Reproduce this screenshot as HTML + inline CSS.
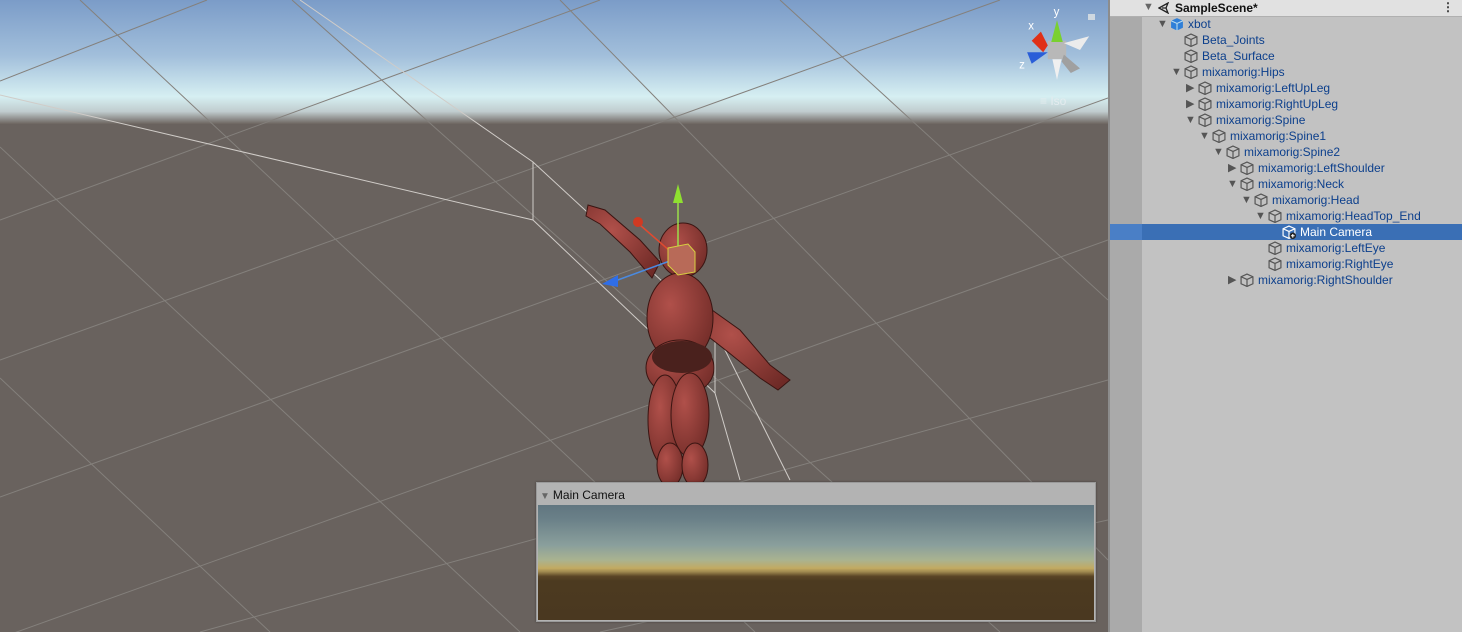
<!DOCTYPE html>
<html><head><meta charset="utf-8"><style>
html,body{margin:0;padding:0;width:1462px;height:632px;overflow:hidden;font-family:"Liberation Sans",sans-serif}
#scene{position:absolute;left:0;top:0;width:1108px;height:632px}
#hier{position:absolute;left:1108px;top:0;width:354px;height:632px;background:#c2c2c2;border-left:2px solid #8c8c8c;box-sizing:border-box}
#strip{position:absolute;left:0;top:0;width:32px;height:632px;background:#aaaaaa}
#hdr{position:absolute;left:0;top:0;width:352px;height:16px;background:#e1e1e1;border-bottom:1px solid #b0b0b0}
.row{position:absolute;left:0;width:352px;height:16px;font-size:12px;line-height:16px;color:#0c3f8c}
.row .t{position:absolute;top:0;white-space:nowrap}
.row svg{position:absolute;top:1px}
.sel{background:#3a6fb5;color:#fff}
.sel .lft{position:absolute;left:0;top:0;width:32px;height:16px;background:#4a7fc6}
#cam{position:absolute;left:536px;top:482px;width:560px;height:140px;border:1px solid #9a9a9a;background:#b3b3b3;box-sizing:border-box;box-shadow:0 0 2px rgba(0,0,0,.4)}
#camh{position:absolute;left:0;top:0;height:22px;width:100%;font-size:12px;line-height:24px;color:#111}
#camimg{position:absolute;left:1px;top:22px;width:556px;height:115px;background:linear-gradient(#617680 0%,#6a8088 12%,#8a9f9c 35%,#aab390 48%,#c2aa62 55%,#a08a50 58%,#5a4526 62%,#4c3a20 66%,#4a3820 100%)}
</style></head><body>
<svg id="scene" width="1108" height="632" viewBox="0 0 1108 632">
<defs>
<linearGradient id="sky" x1="0" y1="0" x2="0" y2="1">
<stop offset="0" stop-color="#7b9cc8"/><stop offset=".45" stop-color="#a2bfdb"/><stop offset=".78" stop-color="#d6eff2"/><stop offset=".9" stop-color="#c0ccce"/><stop offset="1" stop-color="#6d6560"/>
</linearGradient>
<radialGradient id="body" cx=".35" cy=".35" r=".8"><stop offset="0" stop-color="#b0504a"/><stop offset="1" stop-color="#6e2a26"/></radialGradient>
</defs>
<rect width="1108" height="632" fill="#69625e"/>
<rect width="1108" height="124" fill="url(#sky)"/>
<g stroke="#84807c" stroke-width="1" fill="none">
<line x1="0" y1="81" x2="207" y2="0"/>
<line x1="0" y1="220" x2="600" y2="0"/>
<line x1="0" y1="360" x2="1000" y2="0"/>
<line x1="0" y1="497" x2="1108" y2="98"/>
<line x1="0" y1="638" x2="1108" y2="240"/>
<line x1="200" y1="632" x2="1108" y2="380"/>
<line x1="600" y1="632" x2="1108" y2="520"/>
<line x1="0" y1="378" x2="270" y2="632"/>
<line x1="0" y1="147" x2="520" y2="632"/>
<line x1="80" y1="0" x2="755" y2="632"/>
<line x1="292" y1="0" x2="1000" y2="632"/>
<line x1="560" y1="0" x2="1108" y2="560"/>
<line x1="780" y1="0" x2="1108" y2="300"/>
</g>
<g stroke="#d0ccc8" stroke-width="1" fill="none">
<polyline points="300,0 533,162 715,330 790,480"/>
<polyline points="0,95 533,220 715,393 740,480"/>
<line x1="533" y1="162" x2="533" y2="220"/>
<line x1="715" y1="330" x2="715" y2="393"/>
</g>
<g fill="url(#body)" stroke="#3a1512" stroke-width="1">
<path d="M588,205 L605,210 L640,240 L660,262 L652,278 L630,252 L600,224 L586,216Z"/>
<path d="M705,305 L740,330 L770,365 L790,380 L778,390 L760,378 L728,352 L700,330Z"/>
<ellipse cx="683" cy="250" rx="24" ry="27"/>
<ellipse cx="680" cy="318" rx="33" ry="45"/>
<ellipse cx="680" cy="368" rx="34" ry="28"/>
<ellipse cx="665" cy="420" rx="17" ry="45"/>
<ellipse cx="690" cy="415" rx="19" ry="42"/>
<ellipse cx="670" cy="465" rx="13" ry="22"/>
<ellipse cx="695" cy="465" rx="13" ry="22"/>
</g>
<ellipse cx="682" cy="357" rx="30" ry="16" fill="#4a211d"/>
<g stroke-width="1.5">
<line x1="678" y1="258" x2="678" y2="200" stroke="#9be04a"/>
<polygon points="673,203 683,203 678,184" fill="#8fe030"/>
<line x1="678" y1="258" x2="640" y2="225" stroke="#e04a30"/>
<circle cx="638" cy="222" r="5" fill="#d03a22"/>
<line x1="678" y1="258" x2="615" y2="281" stroke="#4a8ae0"/>
<polygon points="602,284 618,275 618,287" fill="#2f6ee8"/>
<polygon points="668,248 688,244 695,252 695,272 678,275 668,265" fill="#b86a58" stroke="#d8d040" stroke-width="1"/>
</g>
<g transform="translate(1057,50) scale(1.15)">
<rect x="-8" y="-8" width="16" height="16" fill="#b8b8b8"/>
<polygon points="-5,-7 5,-7 0,-26" fill="#7ad030"/>
<polygon points="-8,-4 -14,-16 -22,-8 -12,2" fill="#e03018"/>
<polygon points="-8,2 -26,2 -22,12" fill="#2a5ed8"/>
<polygon points="6,-6 28,-12 20,0" fill="#ececec"/>
<polygon points="6,4 20,16 12,20 4,10" fill="#a0a0a0"/>
<polygon points="-4,8 4,8 0,26" fill="#f0f0f0"/>
<text x="-25" y="-18" font-size="10" fill="#fff" font-family="Liberation Sans">x</text>
<text x="-3" y="-30" font-size="10" fill="#fff" font-family="Liberation Sans">y</text>
<text x="-33" y="16" font-size="10" fill="#fff" font-family="Liberation Sans">z</text>
</g>
<rect x="1088" y="14" width="7" height="6" fill="#cfd8e0"/>
<text x="1040" y="105" font-size="12" fill="#e4ecef" font-family="Liberation Sans">≡ Iso</text>
</svg>
<div id="cam"><div id="camh"><span style="color:#666;font-size:10px;margin:0 3px 0 3px">▼</span>Main Camera</div><div id="camimg"></div></div>
<div id="hier">
<div id="strip"></div>
<div id="hdr"><span style="position:absolute;left:33px;top:1px;font-size:11px;color:#666">▼</span>
<svg style="position:absolute;left:48px;top:2px" width="12" height="12" viewBox="0 0 12 12"><path d="M1,6 L10,1 L8,6 L10,11Z M4,6 L8,6" fill="none" stroke="#222" stroke-width="1.3"/></svg>
<span style="position:absolute;left:65px;top:0;font-size:12px;line-height:16px;font-weight:bold;color:#111">SampleScene*</span>
<span style="position:absolute;right:8px;top:0;font-size:12px;line-height:15px;color:#333;font-weight:bold">⋮</span></div>
<div id="rows"></div>
</div>
<script>
const rows=[["xbot",0,1,1],["Beta_Joints",1,0],["Beta_Surface",1,0],["mixamorig:Hips",1,1],["mixamorig:LeftUpLeg",2,2],["mixamorig:RightUpLeg",2,2],["mixamorig:Spine",2,1],["mixamorig:Spine1",3,1],["mixamorig:Spine2",4,1],["mixamorig:LeftShoulder",5,2],["mixamorig:Neck",5,1],["mixamorig:Head",6,1],["mixamorig:HeadTop_End",7,1],["Main Camera",8,0,2],["mixamorig:LeftEye",7,0],["mixamorig:RightEye",7,0],["mixamorig:RightShoulder",5,2]];
let h="";
rows.forEach((r,i)=>{const y=16+i*16,tx=78+r[1]*14,ix=tx-18,ax=ix-13;const sel=r[3]==2;
h+=`<div class="row${sel?' sel':''}" style="top:${y}px">${sel?'<div class="lft"></div>':''}`;
if(r[2]==1)h+=`<span style="position:absolute;left:${ax}px;top:0;font-size:11px;color:#555">▼</span>`;
if(r[2]==2)h+=`<span style="position:absolute;left:${ax+1}px;top:0;font-size:11px;color:#555">▶</span>`;
const c=sel?'#fff':'#555';
if(r[3]==1)h+=`<svg style="left:${ix}px" width="14" height="14" viewBox="0 0 13 13"><path d="M6.5,1 L12,3.5 L12,10 L6.5,12.5 L1,10 L1,3.5Z" fill="#2f7fd8"/><path d="M6.5,6 L6.5,12.5 M1,3.5 L6.5,6 L12,3.5" stroke="#bde" fill="none"/></svg>`;
else h+=`<svg style="left:${ix}px" width="14" height="14" viewBox="0 0 13 13"><path d="M6.5,1 L12,3.5 L12,10 L6.5,12.5 L1,10 L1,3.5Z M1,3.5 L6.5,6 L12,3.5 M6.5,6 L6.5,12.5" stroke="${c}" stroke-width="1.1" fill="none"/>${sel?'<circle cx="10" cy="10" r="3" fill="#222"/><path d="M8.3,10 h3.4 M10,8.3 v3.4" stroke="#fff"/>':''}</svg>`;
h+=`<span class="t" style="left:${tx}px">${r[0]}</span></div>`;});
document.getElementById("rows").innerHTML=h;
</script>
</body></html>
